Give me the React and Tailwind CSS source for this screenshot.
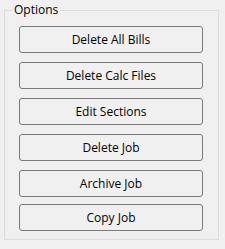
import React from "react";

const labels = ["Delete All Bills", "Delete Calc Files", "Edit Sections", "Delete Job", "Archive Job"];

export default function App() {
  return (
    <div className="w-[225px] h-[249px] bg-[#f0f0f0] text-[12px] font-normal text-black" style={{ fontFamily: '"Open Sans", "Noto Sans", sans-serif' }}>
      <div className="pl-[4px] pr-[6px] pt-0">
        <fieldset className="m-0 border border-[#dcdcdc] p-0 h-[240px]">
          <legend className="ml-[7px] px-[2px] leading-[20px] text-[12px]">Options</legend>
          <div className="flex flex-col gap-[9px] pl-[14px] pr-[15px] pt-[6px]">
            {labels.map((l) => (
              <button key={l} className="h-[27px] w-full rounded-[3px] border border-[#7a7a7a] bg-[#f0f0f0] leading-[25px] text-[12px] font-normal">
                {l}
              </button>
            ))}
            <button className="-mt-[2px] h-[27px] w-full rounded-[3px] border border-[#7a7a7a] bg-[#f0f0f0] leading-[25px] text-[12px] font-normal">
              Copy Job
            </button>
          </div>
        </fieldset>
      </div>
    </div>
  );
}
